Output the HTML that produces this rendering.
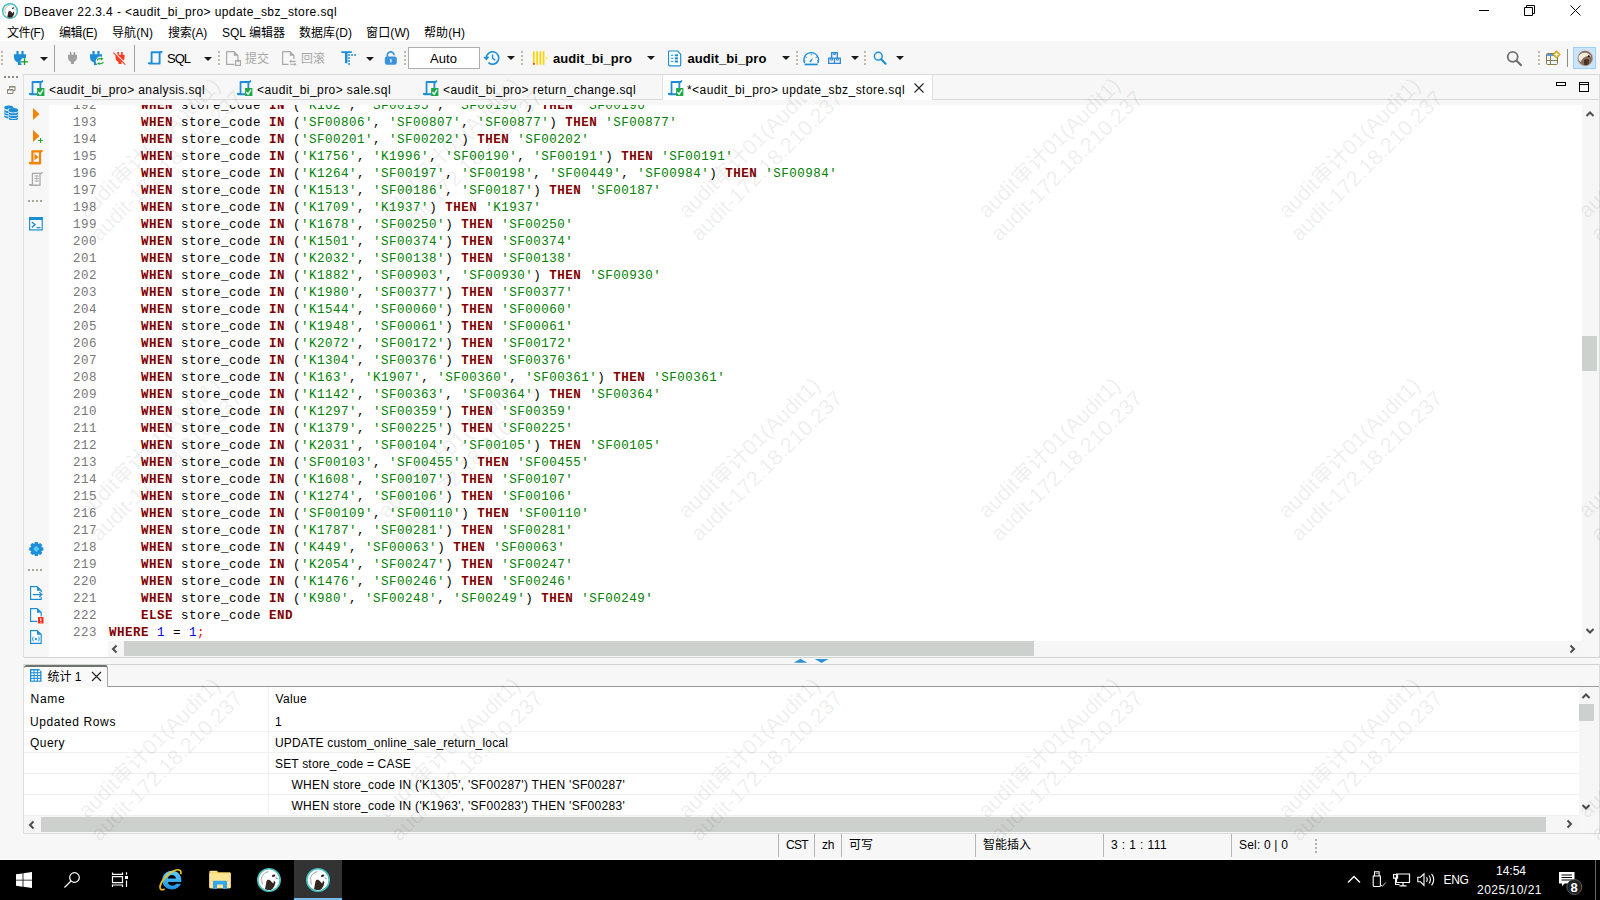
<!DOCTYPE html>
<html lang="zh"><head><meta charset="utf-8"><title>DBeaver 22.3.4 - update_sbz_store.sql</title>
<style>
html,body{margin:0;padding:0;}
body{width:1600px;height:900px;overflow:hidden;background:#fff;position:relative;font-family:"Liberation Sans","Noto Sans CJK SC",sans-serif;font-size:12px;}
.a{position:absolute;display:block;}
.t{position:absolute;white-space:pre;}

.wm{position:absolute;width:300px;height:60px;text-align:center;font-size:21.5px;line-height:24.5px;color:rgba(0,0,0,0.082);transform:rotate(-44.5deg);white-space:pre;pointer-events:none;}
.code{position:absolute;left:0;top:0;font-family:"Liberation Mono",monospace;font-size:12.5px;letter-spacing:0.5px;line-height:17px;white-space:pre;color:#000;}
.code b{color:#800000;}
.code i{color:#008000;font-style:normal;}
.code u{color:#0000ff;text-decoration:none;}
.code s{color:#ff0000;text-decoration:none;}
.ln{color:#787878;}

</style></head><body>
<div class="a" style="left:0px;top:0px;width:1600px;height:23px;background:#fff;"></div><svg class="a" style="left:1470px;top:0px;" width="120" height="22" viewBox="0 0 120 22"><path d="M9 10.5h10M54.5 7.5h8v8h-8zM56.5 7.5v-2h8v8h-2M100.5 5.5l10 10M110.5 5.5l-10 10" fill="none" stroke="#000" stroke-width="1"/></svg><div class="a" style="left:0px;top:23px;width:1600px;height:18px;background:#fff;"></div><div class="a" style="left:0px;top:41px;width:1600px;height:33px;background:#f7f7f7;"></div><svg class="a" style="left:1px;top:51px;" width="2" height="15" viewBox="0 0 2 15"><rect x="0" y="0" width="2" height="2" fill="#c2b9a7"/><rect x="0" y="4" width="2" height="2" fill="#c2b9a7"/><rect x="0" y="8" width="2" height="2" fill="#c2b9a7"/><rect x="0" y="12" width="2" height="2" fill="#c2b9a7"/></svg><svg class="a" style="left:40px;top:57px;" width="8" height="4" viewBox="0 0 8 4"><path d="M0 0h8l-4 4z" fill="#1a1a1a"/></svg><div class="a" style="left:54px;top:45px;width:1px;height:27px;background:#a0a0a0;"></div><div class="a" style="left:134px;top:45px;width:1px;height:27px;background:#a0a0a0;"></div><svg class="a" style="left:204px;top:57px;" width="8" height="4" viewBox="0 0 8 4"><path d="M0 0h8l-4 4z" fill="#1a1a1a"/></svg><svg class="a" style="left:218px;top:51px;" width="2" height="15" viewBox="0 0 2 15"><rect x="0" y="0" width="2" height="2" fill="#c2b9a7"/><rect x="0" y="4" width="2" height="2" fill="#c2b9a7"/><rect x="0" y="8" width="2" height="2" fill="#c2b9a7"/><rect x="0" y="12" width="2" height="2" fill="#c2b9a7"/></svg><svg class="a" style="left:366px;top:57px;" width="8" height="4" viewBox="0 0 8 4"><path d="M0 0h8l-4 4z" fill="#1a1a1a"/></svg><svg class="a" style="left:404px;top:51px;" width="2" height="15" viewBox="0 0 2 15"><rect x="0" y="0" width="2" height="2" fill="#c2b9a7"/><rect x="0" y="4" width="2" height="2" fill="#c2b9a7"/><rect x="0" y="8" width="2" height="2" fill="#c2b9a7"/><rect x="0" y="12" width="2" height="2" fill="#c2b9a7"/></svg><svg class="a" style="left:507px;top:56px;" width="8" height="4" viewBox="0 0 8 4"><path d="M0 0h8l-4 4z" fill="#1a1a1a"/></svg><svg class="a" style="left:521px;top:51px;" width="2" height="15" viewBox="0 0 2 15"><rect x="0" y="0" width="2" height="2" fill="#c2b9a7"/><rect x="0" y="4" width="2" height="2" fill="#c2b9a7"/><rect x="0" y="8" width="2" height="2" fill="#c2b9a7"/><rect x="0" y="12" width="2" height="2" fill="#c2b9a7"/></svg><svg class="a" style="left:647px;top:56px;" width="8" height="4" viewBox="0 0 8 4"><path d="M0 0h8l-4 4z" fill="#1a1a1a"/></svg><svg class="a" style="left:782px;top:56px;" width="8" height="4" viewBox="0 0 8 4"><path d="M0 0h8l-4 4z" fill="#1a1a1a"/></svg><svg class="a" style="left:796px;top:51px;" width="2" height="15" viewBox="0 0 2 15"><rect x="0" y="0" width="2" height="2" fill="#c2b9a7"/><rect x="0" y="4" width="2" height="2" fill="#c2b9a7"/><rect x="0" y="8" width="2" height="2" fill="#c2b9a7"/><rect x="0" y="12" width="2" height="2" fill="#c2b9a7"/></svg><svg class="a" style="left:851px;top:56px;" width="8" height="4" viewBox="0 0 8 4"><path d="M0 0h8l-4 4z" fill="#1a1a1a"/></svg><svg class="a" style="left:864px;top:51px;" width="2" height="15" viewBox="0 0 2 15"><rect x="0" y="0" width="2" height="2" fill="#c2b9a7"/><rect x="0" y="4" width="2" height="2" fill="#c2b9a7"/><rect x="0" y="8" width="2" height="2" fill="#c2b9a7"/><rect x="0" y="12" width="2" height="2" fill="#c2b9a7"/></svg><svg class="a" style="left:896px;top:56px;" width="8" height="4" viewBox="0 0 8 4"><path d="M0 0h8l-4 4z" fill="#1a1a1a"/></svg><div class="a" style="left:408px;top:47px;width:72px;height:22px;background:#fff;border:1px solid #adadad;box-sizing:border-box;"></div><svg class="a" style="left:1538px;top:51px;" width="2" height="15" viewBox="0 0 2 15"><rect x="0" y="0" width="2" height="2" fill="#c2b9a7"/><rect x="0" y="4" width="2" height="2" fill="#c2b9a7"/><rect x="0" y="8" width="2" height="2" fill="#c2b9a7"/><rect x="0" y="12" width="2" height="2" fill="#c2b9a7"/></svg><div class="a" style="left:1567px;top:49px;width:1px;height:18px;background:#8c8c8c;"></div><div class="a" style="left:1573px;top:47px;width:23px;height:22px;background:#cce4f7;border:1px solid #99d1ff;box-sizing:border-box;"></div><div class="a" style="left:0px;top:74px;width:23px;height:786px;background:#f7f7f7;"></div><div class="a" style="left:23px;top:74px;width:1577px;height:583px;background:#f7f7f7;border-left:1px solid #e0e0e0;border-top:1px solid #d9d9d9;box-sizing:border-box;"></div><div class="a" style="left:24px;top:99px;width:1576px;height:1px;background:#d9d9d9;"></div><div class="a" style="left:662px;top:75px;width:271px;height:25px;background:#fff;border-left:1px solid #e0e0e0;border-right:1px solid #e0e0e0;box-sizing:border-box;"></div><svg class="a" style="left:913px;top:82px;" width="12" height="12" viewBox="0 0 12 12"><path d="M1.5 1.5l9 9M10.5 1.5l-9 9" stroke="#222" stroke-width="1.1" fill="none"/></svg><svg class="a" style="left:1555px;top:80px;" width="40" height="14" viewBox="0 0 40 14"><rect x="1.5" y="2.5" width="9" height="3" fill="#fff" stroke="#000"/><rect x="24.5" y="2.5" width="9" height="9" fill="#fff" stroke="#000"/><path d="M24 4.5h10" stroke="#000"/></svg><div class="a" style="left:49px;top:105px;width:1533px;height:536px;background:#fff;"></div><div class="a" style="left:49px;top:641px;width:59px;height:16px;background:#fff;"></div><div class="a" style="left:1582px;top:105px;width:17px;height:536px;background:#f6f6f6;"></div><div class="a" style="left:1582px;top:336px;width:15px;height:35px;background:#cdd1cd;"></div><svg class="a" style="left:1585px;top:110px;" width="10" height="8" viewBox="0 0 10 8"><path d="M1.500 6L5 2.500 8.500 6" stroke="#4d4d4d" stroke-width="2" fill="none"/></svg><svg class="a" style="left:1585px;top:627px;" width="10" height="8" viewBox="0 0 10 8"><path d="M1.500 2L5 5.500 8.500 2" stroke="#4d4d4d" stroke-width="2" fill="none"/></svg><div class="a" style="left:108px;top:641px;width:1474px;height:16px;background:#f6f6f6;"></div><div class="a" style="left:124px;top:641px;width:910px;height:15px;background:#cdd1cd;"></div><svg class="a" style="left:111px;top:644px;" width="8" height="10" viewBox="0 0 8 10"><path d="M5.500 1.500L2 5l3.500 3.500" stroke="#4d4d4d" stroke-width="2" fill="none"/></svg><svg class="a" style="left:1568px;top:644px;" width="8" height="10" viewBox="0 0 8 10"><path d="M2.500 1.500L6 5l-3.500 3.500" stroke="#4d4d4d" stroke-width="2" fill="none"/></svg><div class="a" style="left:49px;top:105px;width:1533px;height:536px;overflow:hidden;"><div class="code ln" style="left:24px;top:-7px;">192
193
194
195
196
197
198
199
200
201
202
203
204
205
206
207
208
209
210
211
212
213
214
215
216
217
218
219
220
221
222
223</div><div class="code" style="left:60px;top:-7px;">    <b>WHEN</b> store_code <b>IN</b> (<i>'K162'</i>, <i>'SF00195'</i>, <i>'SF00196'</i>) <b>THEN</b> <i>'SF00196'</i>
    <b>WHEN</b> store_code <b>IN</b> (<i>'SF00806'</i>, <i>'SF00807'</i>, <i>'SF00877'</i>) <b>THEN</b> <i>'SF00877'</i>
    <b>WHEN</b> store_code <b>IN</b> (<i>'SF00201'</i>, <i>'SF00202'</i>) <b>THEN</b> <i>'SF00202'</i>
    <b>WHEN</b> store_code <b>IN</b> (<i>'K1756'</i>, <i>'K1996'</i>, <i>'SF00190'</i>, <i>'SF00191'</i>) <b>THEN</b> <i>'SF00191'</i>
    <b>WHEN</b> store_code <b>IN</b> (<i>'K1264'</i>, <i>'SF00197'</i>, <i>'SF00198'</i>, <i>'SF00449'</i>, <i>'SF00984'</i>) <b>THEN</b> <i>'SF00984'</i>
    <b>WHEN</b> store_code <b>IN</b> (<i>'K1513'</i>, <i>'SF00186'</i>, <i>'SF00187'</i>) <b>THEN</b> <i>'SF00187'</i>
    <b>WHEN</b> store_code <b>IN</b> (<i>'K1709'</i>, <i>'K1937'</i>) <b>THEN</b> <i>'K1937'</i>
    <b>WHEN</b> store_code <b>IN</b> (<i>'K1678'</i>, <i>'SF00250'</i>) <b>THEN</b> <i>'SF00250'</i>
    <b>WHEN</b> store_code <b>IN</b> (<i>'K1501'</i>, <i>'SF00374'</i>) <b>THEN</b> <i>'SF00374'</i>
    <b>WHEN</b> store_code <b>IN</b> (<i>'K2032'</i>, <i>'SF00138'</i>) <b>THEN</b> <i>'SF00138'</i>
    <b>WHEN</b> store_code <b>IN</b> (<i>'K1882'</i>, <i>'SF00903'</i>, <i>'SF00930'</i>) <b>THEN</b> <i>'SF00930'</i>
    <b>WHEN</b> store_code <b>IN</b> (<i>'K1980'</i>, <i>'SF00377'</i>) <b>THEN</b> <i>'SF00377'</i>
    <b>WHEN</b> store_code <b>IN</b> (<i>'K1544'</i>, <i>'SF00060'</i>) <b>THEN</b> <i>'SF00060'</i>
    <b>WHEN</b> store_code <b>IN</b> (<i>'K1948'</i>, <i>'SF00061'</i>) <b>THEN</b> <i>'SF00061'</i>
    <b>WHEN</b> store_code <b>IN</b> (<i>'K2072'</i>, <i>'SF00172'</i>) <b>THEN</b> <i>'SF00172'</i>
    <b>WHEN</b> store_code <b>IN</b> (<i>'K1304'</i>, <i>'SF00376'</i>) <b>THEN</b> <i>'SF00376'</i>
    <b>WHEN</b> store_code <b>IN</b> (<i>'K163'</i>, <i>'K1907'</i>, <i>'SF00360'</i>, <i>'SF00361'</i>) <b>THEN</b> <i>'SF00361'</i>
    <b>WHEN</b> store_code <b>IN</b> (<i>'K1142'</i>, <i>'SF00363'</i>, <i>'SF00364'</i>) <b>THEN</b> <i>'SF00364'</i>
    <b>WHEN</b> store_code <b>IN</b> (<i>'K1297'</i>, <i>'SF00359'</i>) <b>THEN</b> <i>'SF00359'</i>
    <b>WHEN</b> store_code <b>IN</b> (<i>'K1379'</i>, <i>'SF00225'</i>) <b>THEN</b> <i>'SF00225'</i>
    <b>WHEN</b> store_code <b>IN</b> (<i>'K2031'</i>, <i>'SF00104'</i>, <i>'SF00105'</i>) <b>THEN</b> <i>'SF00105'</i>
    <b>WHEN</b> store_code <b>IN</b> (<i>'SF00103'</i>, <i>'SF00455'</i>) <b>THEN</b> <i>'SF00455'</i>
    <b>WHEN</b> store_code <b>IN</b> (<i>'K1608'</i>, <i>'SF00107'</i>) <b>THEN</b> <i>'SF00107'</i>
    <b>WHEN</b> store_code <b>IN</b> (<i>'K1274'</i>, <i>'SF00106'</i>) <b>THEN</b> <i>'SF00106'</i>
    <b>WHEN</b> store_code <b>IN</b> (<i>'SF00109'</i>, <i>'SF00110'</i>) <b>THEN</b> <i>'SF00110'</i>
    <b>WHEN</b> store_code <b>IN</b> (<i>'K1787'</i>, <i>'SF00281'</i>) <b>THEN</b> <i>'SF00281'</i>
    <b>WHEN</b> store_code <b>IN</b> (<i>'K449'</i>, <i>'SF00063'</i>) <b>THEN</b> <i>'SF00063'</i>
    <b>WHEN</b> store_code <b>IN</b> (<i>'K2054'</i>, <i>'SF00247'</i>) <b>THEN</b> <i>'SF00247'</i>
    <b>WHEN</b> store_code <b>IN</b> (<i>'K1476'</i>, <i>'SF00246'</i>) <b>THEN</b> <i>'SF00246'</i>
    <b>WHEN</b> store_code <b>IN</b> (<i>'K980'</i>, <i>'SF00248'</i>, <i>'SF00249'</i>) <b>THEN</b> <i>'SF00249'</i>
    <b>ELSE</b> store_code <b>END</b>
<b>WHERE</b> <u>1</u> = <u>1</u><s>;</s></div></div><div class="a" style="left:23px;top:657px;width:1577px;height:8px;background:#f7f7f7;"></div><div class="a" style="left:24px;top:657px;width:1576px;height:1px;background:#d0d4d0;"></div><div class="a" style="left:24px;top:664px;width:1576px;height:1px;background:#d0d4d0;"></div><svg class="a" style="left:793px;top:658px;" width="38" height="6" viewBox="0 0 38 6"><path d="M0.700 4.800l6.800-4 6.800 4zM21.800 1h13.600l-6.800 4z" fill="#2e8fd6"/></svg><div class="a" style="left:23px;top:665px;width:1577px;height:168px;background:#f7f7f7;"></div><div class="a" style="left:24px;top:686px;width:1576px;height:1px;background:#9a9a9a;"></div><div class="a" style="left:24px;top:665px;width:84px;height:22px;background:#f9f9f9;border-right:1px solid #a8a8a8;border-top:2px solid #6f726f;box-sizing:border-box;border-top-left-radius:3px;border-top-right-radius:3px;"></div><svg class="a" style="left:91px;top:671px;" width="11" height="11" viewBox="0 0 11 11"><path d="M1 1l9 9M10 1l-9 9" stroke="#222" stroke-width="1.1" fill="none"/></svg><div class="a" style="left:24px;top:687px;width:1555px;height:129px;background:#fff;"></div><div class="a" style="left:24px;top:731px;width:1558px;height:1px;background:#f0f0f0;"></div><div class="a" style="left:24px;top:752px;width:1558px;height:1px;background:#f0f0f0;"></div><div class="a" style="left:24px;top:773px;width:1558px;height:1px;background:#f0f0f0;"></div><div class="a" style="left:24px;top:794px;width:1558px;height:1px;background:#f0f0f0;"></div><div class="a" style="left:24px;top:815px;width:1558px;height:1px;background:#f0f0f0;"></div><div class="a" style="left:268px;top:687px;width:1px;height:129px;background:#f0f0f0;"></div><div class="a" style="left:1579px;top:687px;width:20px;height:129px;background:#f6f6f6;"></div><div class="a" style="left:1579px;top:704px;width:15px;height:17px;background:#cdd1cd;"></div><svg class="a" style="left:1581px;top:692px;" width="10" height="8" viewBox="0 0 10 8"><path d="M1.500 6L5 2.500 8.500 6" stroke="#4d4d4d" stroke-width="2" fill="none"/></svg><svg class="a" style="left:1581px;top:803px;" width="10" height="8" viewBox="0 0 10 8"><path d="M1.500 2L5 5.500 8.500 2" stroke="#4d4d4d" stroke-width="2" fill="none"/></svg><div class="a" style="left:24px;top:816px;width:1555px;height:17px;background:#f6f6f6;"></div><div class="a" style="left:41px;top:817px;width:1505px;height:15px;background:#cdd1cd;"></div><svg class="a" style="left:28px;top:819.5px;" width="8" height="10" viewBox="0 0 8 10"><path d="M5.500 1.500L2 5l3.500 3.500" stroke="#4d4d4d" stroke-width="2" fill="none"/></svg><svg class="a" style="left:1565px;top:819px;" width="8" height="10" viewBox="0 0 8 10"><path d="M2.500 1.500L6 5l-3.500 3.500" stroke="#4d4d4d" stroke-width="2" fill="none"/></svg><div class="a" style="left:0px;top:833px;width:1600px;height:27px;background:#f7f7f7;"></div><div class="a" style="left:23px;top:833px;width:1577px;height:1px;background:#dcdcdc;"></div><div class="a" style="left:23px;top:664px;width:1px;height:170px;background:#dcdcdc;"></div><div class="a" style="left:1599px;top:664px;width:1px;height:170px;background:#dcdcdc;"></div><div class="a" style="left:1599px;top:74px;width:1px;height:584px;background:#dcdcdc;"></div><div class="a" style="left:0px;top:859px;width:1600px;height:1px;background:#fbfbfb;"></div><div class="a" style="left:778px;top:834px;width:1px;height:23px;background:#b4b4b4;"></div><div class="a" style="left:814px;top:834px;width:1px;height:23px;background:#b4b4b4;"></div><div class="a" style="left:841px;top:834px;width:1px;height:23px;background:#b4b4b4;"></div><div class="a" style="left:975px;top:834px;width:1px;height:23px;background:#b4b4b4;"></div><div class="a" style="left:1103px;top:834px;width:1px;height:23px;background:#b4b4b4;"></div><div class="a" style="left:1231px;top:834px;width:1px;height:23px;background:#b4b4b4;"></div><svg class="a" style="left:1315px;top:839px;" width="2" height="14" viewBox="0 0 2 14"><rect x="0" y="0" width="2" height="2" fill="#b0b0b0"/><rect x="0" y="4" width="2" height="2" fill="#b0b0b0"/><rect x="0" y="8" width="2" height="2" fill="#b0b0b0"/><rect x="0" y="12" width="2" height="2" fill="#b0b0b0"/></svg><div class="a" style="left:0px;top:860px;width:1600px;height:40px;background:#000;"></div><div class="a" style="left:294px;top:860px;width:48px;height:40px;background:#333;"></div><div class="a" style="left:294px;top:898px;width:48px;height:2px;background:#76b9ed;"></div><svg class="a" style="left:16px;top:872px;" width="16" height="16" viewBox="0 0 16 16"><path d="M0 2.3l6.6-.9v6.3H0zM7.4 1.3L16 0v7.7H7.4zM0 8.4h6.6v6.3L0 13.8zM7.4 8.4H16V16l-8.6-1.2z" fill="#fff"/></svg><svg class="a" style="left:63px;top:871px;" width="18" height="18" viewBox="0 0 18 18"><circle cx="11.500" cy="6.500" r="4.800" fill="none" stroke="#fff" stroke-width="1.200"/><path d="M8 10l-6.500 6.500" stroke="#fff" stroke-width="1.300"/></svg><svg class="a" style="left:110px;top:871px;" width="20" height="17" viewBox="0 0 20 17"><path d="M2.500 5.700h10v6h-10zM2.500 1.400v2h10v-2M2.500 16v-2h10v2M16.500 1.200v2.600M16.500 9.500v6.500" fill="none" stroke="#fff" stroke-width="1.200"/><rect x="15" y="5" width="3" height="3" fill="#fff"/></svg><div class="a" style="left:1595px;top:860px;width:1px;height:40px;background:#666;"></div><svg class="a" style="left:0px;top:0px;" width="22" height="23" viewBox="0 0 22 23"><circle cx="10" cy="11" r="7.35" fill="#fff" stroke="#45bdbd" stroke-width="1.5"/><g transform="translate(10 11) scale(0.675)"><path d="M-4 9.300L-2.500 1.200C-1.500-.800.800-.600 2.200 1.600L4.200 3.600 5.100.400 6.400 2.600 5.600 5.800 3.300 9.200C1 10.300-2 10.300-4 9.300z" fill="#33251f"/><ellipse cx="4.600" cy="-4.300" rx="1.700" ry="1.100" fill="#2a1f1c" transform="rotate(-15 4.600 -4.300)"/><path d="M-7.800-.500C-7.500-4.500-4.500-7.800-.500-8.300M-6.500 4.500C-7.200 2.500-7.300 1-7-.500" fill="none" stroke="#8f8782" stroke-width=".8"/><path d="M6.800-2.500c.8.300 1.300.900 1.500 1.600" fill="none" stroke="#5a4a44" stroke-width=".8"/></g></svg><svg class="a" style="left:14px;top:51px;" width="15" height="14" viewBox="0 0 15 14"><g><path d="M2.4 0h2.200v3.300h2.800V0h2.200v3.300H12v3.200c0 2.600-1.800 4.300-4 5v2.500H4v-2.500c-2.200-.7-4-2.400-4-5V3.300h2.400z" fill="#1c8ed8"/></g><circle cx="10.5" cy="10.800" r="3.900" fill="#f7f7f7"/><path d="M10.5 7.300v7M7 10.800h7" stroke="#0aa01e" stroke-width="1.250" fill="none"/></svg><svg class="a" style="left:68px;top:52px;" width="9" height="12" viewBox="0 0 9 12"><g transform="scale(.75 .86)"><path d="M2.4 0h2.200v3.300h2.800V0h2.200v3.300H12v3.200c0 2.600-1.800 4.300-4 5v2.500H4v-2.500c-2.200-.7-4-2.400-4-5V3.300h2.400z" fill="#a0a0a0"/></g></svg><svg class="a" style="left:90px;top:51px;" width="15" height="14" viewBox="0 0 15 14"><path d="M2.4 0h2.200v3.300h2.800V0h2.200v3.300H12v3.200c0 2.600-1.800 4.300-4 5v2.500H4v-2.500c-2.200-.7-4-2.400-4-5V3.300h2.400z" fill="#1c8ed8"/><circle cx="10.300" cy="10.200" r="4.600" fill="#f7f7f7"/><path d="M7.200 9.600c.5-1.700 2.600-2.500 4.300-1.600M13.300 10.800c-.5 1.700-2.600 2.500-4.300 1.600" stroke="#12a32a" stroke-width="1.100" fill="none"/><path d="M10.800 6.300l2.600 1.500-2.300 1.700zM9.700 14.100l-2.600-1.500 2.300-1.700z" fill="#12a32a"/></svg><svg class="a" style="left:113px;top:52px;" width="13" height="13" viewBox="0 0 13 13"><g transform="translate(2.500 0) scale(.75 .86)"><path d="M2.4 0h2.200v3.300h2.800V0h2.200v3.300H12v3.200c0 2.600-1.800 4.300-4 5v2.500H4v-2.500c-2.200-.7-4-2.400-4-5V3.300h2.400z" fill="#ff3a1e"/></g><path d="M0.900 0.100L12.500 12" stroke="#f7f7f7" stroke-width="1.700"/><path d="M0.300 0.600L12.300 12.600" stroke="#ff3a1e" stroke-width="1.100"/></svg><svg class="a" style="left:148px;top:51px;" width="15" height="14" viewBox="0 0 15 14"><path d="M14.400 0.400c-.9 0-1.300.4-1.500.9H3.600v10.400M11.600 1.300v11.300H1.800c-.7 0-1.200-.4-1.500-.9" fill="none" stroke="#1c8ed8" stroke-width="1.9" stroke-linejoin="round"/><path d="M0 11.500h3.800v.900H0z" fill="#1c8ed8"/></svg><svg class="a" style="left:29px;top:80px;" width="16" height="17" viewBox="0 0 16 17"><g transform="translate(0 .6) scale(.98 1.080)"><path d="M14.400 0.400c-.9 0-1.300.4-1.500.9H3.600v10.400M11.600 1.300v11.300H1.800c-.7 0-1.200-.4-1.500-.9" fill="none" stroke="#1c8ed8" stroke-width="1.8" stroke-linejoin="round"/><path d="M0 11.500h3.800v.900H0z" fill="#1c8ed8"/></g><rect x="8.100" y="8" width="7.300" height="8" fill="#21a84a"/><path d="M9.400 12.200l1.700 1.900 3-4.500" stroke="#fff" stroke-width="1.300" fill="none"/></svg><svg class="a" style="left:237px;top:80px;" width="16" height="17" viewBox="0 0 16 17"><g transform="translate(0 .6) scale(.98 1.080)"><path d="M14.400 0.400c-.9 0-1.300.4-1.500.9H3.600v10.400M11.600 1.300v11.300H1.800c-.7 0-1.200-.4-1.500-.9" fill="none" stroke="#1c8ed8" stroke-width="1.8" stroke-linejoin="round"/><path d="M0 11.500h3.800v.900H0z" fill="#1c8ed8"/></g><rect x="8.100" y="8" width="7.300" height="8" fill="#21a84a"/><path d="M9.400 12.200l1.700 1.900 3-4.500" stroke="#fff" stroke-width="1.300" fill="none"/></svg><svg class="a" style="left:423px;top:80px;" width="16" height="17" viewBox="0 0 16 17"><g transform="translate(0 .6) scale(.98 1.080)"><path d="M14.400 0.400c-.9 0-1.300.4-1.500.9H3.600v10.400M11.600 1.300v11.300H1.800c-.7 0-1.200-.4-1.500-.9" fill="none" stroke="#1c8ed8" stroke-width="1.8" stroke-linejoin="round"/><path d="M0 11.500h3.800v.900H0z" fill="#1c8ed8"/></g><rect x="8.100" y="8" width="7.300" height="8" fill="#21a84a"/><path d="M9.400 12.200l1.700 1.900 3-4.500" stroke="#fff" stroke-width="1.300" fill="none"/></svg><svg class="a" style="left:667.6px;top:80px;" width="16" height="17" viewBox="0 0 16 17"><g transform="translate(0 .6) scale(.98 1.080)"><path d="M14.400 0.400c-.9 0-1.300.4-1.500.9H3.600v10.400M11.600 1.300v11.300H1.800c-.7 0-1.200-.4-1.500-.9" fill="none" stroke="#1c8ed8" stroke-width="1.8" stroke-linejoin="round"/><path d="M0 11.500h3.800v.900H0z" fill="#1c8ed8"/></g><rect x="8.100" y="8" width="7.300" height="8" fill="#21a84a"/><path d="M9.400 12.200l1.700 1.900 3-4.500" stroke="#fff" stroke-width="1.300" fill="none"/></svg><svg class="a" style="left:226px;top:51px;" width="16" height="15" viewBox="0 0 16 15"><path d="M0.600 0.600h7.400l3.900 3.900v5M8.500 13.400H0.600V0.600" fill="none" stroke="#a8a8a8" stroke-width="1.200"/><path d="M7.800 0.600v4.100h4.100z" fill="#a8a8a8"/><rect x="9.600" y="9.600" width="4.800" height="4.800" fill="none" stroke="#a8a8a8" stroke-width="1.200"/><path d="M10.800 10.200h2.400" stroke="#a8a8a8" stroke-width="1.200"/></svg><svg class="a" style="left:282px;top:51px;" width="16" height="16" viewBox="0 0 16 16"><path d="M0.600 0.600h7.400l3.900 3.900v3.500M6.500 13.400H0.600V0.600" fill="none" stroke="#a8a8a8" stroke-width="1.200"/><path d="M7.800 0.600v4.100h4.100z" fill="#a8a8a8"/><path d="M8 10.400h5.500M8.200 13.300h5.500" stroke="#a8a8a8" stroke-width="1.100"/><path d="M9.300 8.800l-2.200 1.600 2.200 1.600zM12.300 11.700l2.200 1.600-2.200 1.600z" fill="#a8a8a8"/></svg><svg class="a" style="left:341px;top:51px;" width="16" height="15" viewBox="0 0 16 15"><path d="M0.300 0.300h10.500v1.800H0.300zM4 1.500h2.500v10.800H4z" fill="#1c8ed8"/><rect x="7.2" y="3.100" width="1.700" height="1.700" fill="#1c8ed8"/><rect x="10.2" y="3.100" width="1.700" height="1.700" fill="#1c8ed8"/><rect x="13.2" y="3.100" width="1.700" height="1.700" fill="#1c8ed8"/><rect x="7.200" y="6.1" width="1.700" height="1.700" fill="#1c8ed8"/><rect x="7.200" y="9.1" width="1.700" height="1.700" fill="#1c8ed8"/><rect x="7.200" y="12.1" width="1.700" height="1.700" fill="#1c8ed8"/></svg><svg class="a" style="left:384px;top:51px;" width="14" height="14" viewBox="0 0 14 14"><path d="M3.300 6V4.200a3.400 3.400 0 0 1 6.800 0" fill="none" stroke="#3a93dc" stroke-width="1.700"/><rect x="0.800" y="5.400" width="12" height="8.400" rx="2.200" fill="#3a93dc"/><path d="M6.200 8h1.300v3.400H6.200z" fill="#fff"/></svg><svg class="a" style="left:483px;top:50px;" width="18" height="16" viewBox="0 0 18 16"><path d="M3.400 8a6.200 6.200 0 1 1 2 4.600" fill="none" stroke="#1c8ed8" stroke-width="1.600"/><path d="M0.300 6.800h6.200L3.400 10.400z" fill="#1c8ed8"/><path d="M9.600 4.400v3.800l2.700 1.900" fill="none" stroke="#1c8ed8" stroke-width="1.400"/></svg><svg class="a" style="left:532px;top:51px;" width="16" height="14" viewBox="0 0 16 14"><rect x="1" y="0.300" width="1.700" height="13.400" fill="#ffd200"/><rect x="4.3" y="0.300" width="1.700" height="13.400" fill="#ffd200"/><rect x="7.5" y="0.300" width="1.700" height="13.400" fill="#ffd200"/><rect x="10.7" y="0.300" width="1.700" height="13.400" fill="#ffd200"/><rect x="1" y="12" width="1.700" height="1.700" fill="#ff2a1a"/><circle cx="14.500" cy="7" r="1" fill="#ffdf33"/></svg><svg class="a" style="left:668px;top:50px;" width="14" height="17" viewBox="0 0 14 17"><path d="M1.500 1h8l3.200 3.200v10.600a1 1 0 0 1-1 1H1.500a1 1 0 0 1-1-1V2a1 1 0 0 1 1-1z" fill="#fff" stroke="#1c8ed8" stroke-width="1.200"/><rect x="2.800" y="4.7" width="2.600" height="1" fill="#1c8ed8"/><rect x="6.800" y="4.3" width="3.200" height="2" fill="#1c8ed8"/><rect x="2.800" y="7.800000000000001" width="2.600" height="1" fill="#1c8ed8"/><rect x="6.800" y="7.4" width="3.200" height="2" fill="#1c8ed8"/><rect x="2.800" y="10.9" width="2.600" height="1" fill="#1c8ed8"/><rect x="6.800" y="10.5" width="3.200" height="2" fill="#1c8ed8"/></svg><svg class="a" style="left:802px;top:51.7px;" width="18" height="15" viewBox="0 0 18 15"><path d="M2.700 11.300A7.300 7.300 0 1 1 15.700 11.300" fill="none" stroke="#1c8ed8" stroke-width="1.300"/><path d="M2.700 11.600h13v1.700H2.700z" fill="#1c8ed8"/><path d="M7.200 9.300l4-3.600-2.400 4.800z" fill="#1c8ed8"/><path d="M9.200 1.500v1.800M3.400 4.800l1.400 1M15 4.800l-1.400 1M1.700 8.800h1.700M16.700 8.800h-1.700" stroke="#1c8ed8" stroke-width="1"/></svg><svg class="a" style="left:827px;top:51px;" width="15" height="14" viewBox="0 0 15 14"><path d="M4.700 1.700h5.600v5.500H4.700zM1.700 7.200h5.800v5.100H1.700zM7.500 7.200h5.800v5.100H7.500z" fill="none" stroke="#2a87d6" stroke-width="1.300"/><path d="M6.600 1.700v1.900h1.800V1.700M3.700 7.200v1.900h1.800V7.200M9.500 7.200v1.900h1.800V7.200" fill="none" stroke="#2a87d6" stroke-width="1"/></svg><svg class="a" style="left:873px;top:50px;" width="15" height="16" viewBox="0 0 15 16"><circle cx="5.300" cy="6.200" r="3.900" fill="none" stroke="#1c8ed8" stroke-width="1.500"/><path d="M8.200 9.200l4.400 4.500" stroke="#1c8ed8" stroke-width="2.100" stroke-linecap="round"/></svg><svg class="a" style="left:1505px;top:49px;" width="19" height="19" viewBox="0 0 19 19"><circle cx="7.700" cy="7.800" r="5" fill="none" stroke="#6e6e6e" stroke-width="1.800"/><path d="M11.300 11.500l5.300 5.300" stroke="#6e6e6e" stroke-width="2.200"/></svg><svg class="a" style="left:1545px;top:50px;" width="17" height="16" viewBox="0 0 17 16"><rect x="1.500" y="3.500" width="11" height="11" rx="1" fill="#eaf6ff" stroke="#8a7a4a" stroke-width="1"/><rect x="2" y="4" width="10" height="2" fill="#5b9be0"/><path d="M5.500 6v8.500M1.500 10.500h11" stroke="#8a7a4a" stroke-width="1"/><path d="M11.500 0.800l3.700 3.700-3.700 3.700-3.700-3.700z" fill="#e7b416" stroke="#c8900a" stroke-width=".8"/><path d="M11.500 2.500v4M9.500 4.500h4" stroke="#fff" stroke-width="1.200"/></svg><svg class="a" style="left:1576px;top:50px;" width="18" height="17" viewBox="0 0 18 17"><circle cx="9.200" cy="8.200" r="7.500" fill="#8a6d5c"/><path d="M2.500 6.500c1.500-3 5-4.500 8.500-3.500 2 1 3.500 2 4.500 4-2-1.500-4-1.500-5.500-.5-2 .5-4 2.500-5.500 5.500-1.500-1.500-2.500-3.500-2-5.500z" fill="#f2ebe2"/><path d="M8 10c1.500-1.500 3.500-1.500 5 0l-.5 4.500c-1.500 1.300-3 1.300-4.500.2z" fill="#4a342a"/><circle cx="12.800" cy="6.300" r="1" fill="#2a1d18"/><circle cx="9.200" cy="8.200" r="7.500" fill="none" stroke="#b7a79b" stroke-width=".6"/></svg><svg class="a" style="left:4px;top:76px;" width="14" height="2" viewBox="0 0 14 2"><rect x="0" y="0" width="2" height="2" fill="#8f8a7c"/><rect x="4" y="0" width="2" height="2" fill="#8f8a7c"/><rect x="8" y="0" width="2" height="2" fill="#8f8a7c"/><rect x="12" y="0" width="2" height="2" fill="#8f8a7c"/></svg><svg class="a" style="left:6px;top:85px;" width="10" height="10" viewBox="0 0 10 10"><path d="M3.500 3.500V1.500h5.500v4H7M1.500 4.500h5.500v4H1.500z" fill="none" stroke="#8a8272" stroke-width="1"/><path d="M3.500 2h5.500M1.500 5h5.500" stroke="#8a8272" stroke-width="1"/></svg><svg class="a" style="left:4px;top:105px;" width="15" height="15" viewBox="0 0 15 15"><path d="M0.300 9.700000000000001v1.600a4.500 2 0 0 0 9 0v-1.600z" fill="#1c8ed8"/><ellipse cx="4.800" cy="9.4" rx="4.500" ry="2" fill="#f7f7f7"/><path d="M0.300 7.0v1.600a4.500 2 0 0 0 9 0v-1.600z" fill="#1c8ed8"/><ellipse cx="4.800" cy="6.699999999999999" rx="4.500" ry="2" fill="#f7f7f7"/><path d="M0.300 4.300000000000001v1.600a4.500 2 0 0 0 9 0v-1.600z" fill="#1c8ed8"/><ellipse cx="4.800" cy="4.0" rx="4.500" ry="2" fill="#f7f7f7"/><ellipse cx="4.8" cy="2.6" rx="4.5" ry="2.1" fill="#1c8ed8"/><rect x="4.300" y="3.400" width="10" height="11" fill="#f7f7f7"/><path d="M4.700 12.0v1.600a4.700 2 0 0 0 9.400 0v-1.600z" fill="#1c8ed8"/><ellipse cx="9.400" cy="11.7" rx="4.700" ry="2" fill="#f7f7f7"/><path d="M4.700 9.3v1.600a4.700 2 0 0 0 9.400 0v-1.600z" fill="#1c8ed8"/><ellipse cx="9.400" cy="9.0" rx="4.700" ry="2" fill="#f7f7f7"/><path d="M4.700 6.6v1.600a4.700 2 0 0 0 9.400 0v-1.600z" fill="#1c8ed8"/><ellipse cx="9.400" cy="6.299999999999999" rx="4.700" ry="2" fill="#f7f7f7"/><ellipse cx="9.4" cy="5.2" rx="4.7" ry="2.2" fill="#1c8ed8"/></svg><svg class="a" style="left:32px;top:108px;" width="8" height="12" viewBox="0 0 8 12"><path d="M1 0l6.500 6L1 12z" fill="#f58200"/></svg><svg class="a" style="left:32px;top:130px;" width="13" height="14" viewBox="0 0 13 14"><path d="M1 0l6.500 6L1 12z" fill="#f58200"/><path d="M8.500 8v5M6 10.500h5" stroke="#2ea02e" stroke-width="1.100"/></svg><svg class="a" style="left:29px;top:150px;" width="15" height="15" viewBox="0 0 15 15"><g transform="scale(.95 1.050)"><path d="M14.400 0.400c-.9 0-1.300.4-1.500.9H3.600v10.400M11.600 1.300v11.300H1.800c-.7 0-1.200-.4-1.500-.9" fill="none" stroke="#f58200" stroke-width="2.3" stroke-linejoin="round"/><path d="M0 11.500h3.800v.900H0z" fill="#f58200"/></g><path d="M5.500 3.800l4 3.200-4 3.200z" fill="#f58200"/></svg><svg class="a" style="left:29px;top:172px;" width="15" height="15" viewBox="0 0 15 15"><g transform="scale(.95 1.050)"><path d="M14.400 0.400c-.9 0-1.300.4-1.500.9H3.600v10.400M11.600 1.300v11.300H1.800c-.7 0-1.200-.4-1.500-.9" fill="none" stroke="#a9a9a9" stroke-width="1.3" stroke-linejoin="round"/><path d="M0 11.500h3.800v.900H0z" fill="#a9a9a9"/></g><path d="M5.500 4h4.500M5.500 6.500h4.500M5.500 9h4.500M7.700 3v7" stroke="#b5b5b5" stroke-width="1"/></svg><svg class="a" style="left:28px;top:200px;" width="14" height="2" viewBox="0 0 14 2"><rect x="0" y="0" width="2" height="2" fill="#aaa696"/><rect x="4" y="0" width="2" height="2" fill="#aaa696"/><rect x="8" y="0" width="2" height="2" fill="#aaa696"/><rect x="12" y="0" width="2" height="2" fill="#aaa696"/></svg><svg class="a" style="left:29px;top:217px;" width="15" height="14" viewBox="0 0 15 14"><rect x="0.600" y="0.600" width="12.600" height="12.300" fill="#fff" stroke="#1c8ed8" stroke-width="1.200"/><rect x="0" y="0" width="13.800" height="3" fill="#1c8ed8"/><path d="M2.800 5l3.200 2.700-3.200 2.700M7.500 10.600h4" fill="none" stroke="#1c8ed8" stroke-width="1.400"/></svg><svg class="a" style="left:29px;top:542px;" width="15" height="14" viewBox="0 0 15 14"><path d="M14.36 5.57L14.36 8.43L12.20 9.01L12.19 9.04L13.30 10.98L11.28 13.00L9.34 11.89L9.32 11.90L8.73 14.06L5.87 14.06L5.29 11.90L5.26 11.89L3.32 13.00L1.30 10.98L2.41 9.04L2.40 9.02L0.24 8.43L0.24 5.57L2.40 4.99L2.41 4.96L1.30 3.02L3.32 1.00L5.26 2.11L5.28 2.10L5.87 -0.06L8.73 -0.06L9.31 2.10L9.34 2.11L11.28 1.00L13.30 3.02L12.19 4.96L12.20 4.98z" fill="#1c8ed8"/><path d="M7.300 3.800l3.200 3.200-3.200 3.200-3.200-3.200z" fill="#5cc6f5"/></svg><svg class="a" style="left:28px;top:569px;" width="14" height="2" viewBox="0 0 14 2"><rect x="0" y="0" width="2" height="2" fill="#aaa696"/><rect x="4" y="0" width="2" height="2" fill="#aaa696"/><rect x="8" y="0" width="2" height="2" fill="#aaa696"/><rect x="12" y="0" width="2" height="2" fill="#aaa696"/></svg><svg class="a" style="left:30px;top:586px;" width="14" height="15" viewBox="0 0 14 15"><path d="M11.200 6.300V4.600l-4-4H0.600v12.800h10.600v-2.500" fill="#fff" stroke="#1c8ed8" stroke-width="1.200"/><path d="M7 0.600v4.200h4.200z" fill="#1c8ed8"/><path d="M3 8.600h8.500M9.200 6.200l2.600 2.400-2.600 2.400" fill="none" stroke="#1c8ed8" stroke-width="1.200"/></svg><svg class="a" style="left:30px;top:608px;" width="14" height="16" viewBox="0 0 14 16"><path d="M7.500 13.400H0.600V0.600h6.600l4 4v4" fill="#fff" stroke="#1c8ed8" stroke-width="1.200"/><path d="M7 0.600v4.200h4.200z" fill="#1c8ed8"/><rect x="8" y="9" width="5.500" height="6.500" fill="#ff2a1a"/><path d="M10.200 10v3h1.100v-3zM10.200 13.700v1h1.100v-1z" fill="#fff"/></svg><svg class="a" style="left:30px;top:630px;" width="14" height="15" viewBox="0 0 14 15"><path d="M0.600 0.600h6.600l4 4v8.800H0.600z" fill="#fff" stroke="#1c8ed8" stroke-width="1.200"/><path d="M7 0.600v4.200h4.200z" fill="#1c8ed8"/><path d="M3.400 6.600c-1 1.400-1 3.400 0 4.800M8.400 6.600c1 1.400 1 3.400 0 4.800" fill="none" stroke="#1c8ed8" stroke-width="1"/><path d="M4.900 7.800l2 2.500M6.900 7.800l-2 2.500" stroke="#1c8ed8" stroke-width="1"/></svg><svg class="a" style="left:30px;top:669px;" width="12" height="13" viewBox="0 0 12 13"><path d="M0 0h9l2.500 2.500V12.800H0z" fill="#1c8ed8"/><rect x="1.3" y="1.5" width="2.300" height="1.700" fill="#fff"/><rect x="1.3" y="4.3" width="2.300" height="1.700" fill="#fff"/><rect x="1.3" y="7.1" width="2.300" height="1.700" fill="#fff"/><rect x="1.3" y="9.9" width="2.300" height="1.700" fill="#fff"/><rect x="4.6" y="1.5" width="2.300" height="1.700" fill="#fff"/><rect x="4.6" y="4.3" width="2.300" height="1.700" fill="#fff"/><rect x="4.6" y="7.1" width="2.300" height="1.700" fill="#fff"/><rect x="4.6" y="9.9" width="2.300" height="1.700" fill="#fff"/><rect x="7.9" y="1.5" width="2.300" height="1.700" fill="#fff"/><rect x="7.9" y="4.3" width="2.300" height="1.700" fill="#fff"/><rect x="7.9" y="7.1" width="2.300" height="1.700" fill="#fff"/><rect x="7.9" y="9.9" width="2.300" height="1.700" fill="#fff"/></svg><svg class="a" style="left:158px;top:866px;" width="26" height="26" viewBox="0 0 26 26"><defs><linearGradient id="ieg" x1="0" y1="0" x2="0" y2="1"><stop offset="0" stop-color="#5fd0fb"/><stop offset="1" stop-color="#1d8fe0"/></linearGradient></defs><path d="M4.300 14.200c0-5.400 4.200-9.400 9.600-9.400 5.500 0 9.400 4 9.400 9.600v1.700H9.800c.5 2.300 2.200 3.600 4.500 3.600 1.700 0 3-.6 4-1.900h4.500c-1.400 3.500-4.600 5.600-8.600 5.600-5.800 0-9.900-3.900-9.900-9.200zm5.500-1.700h8.200c-.4-2.100-1.900-3.400-4-3.400-2.200 0-3.700 1.300-4.200 3.400z" fill="url(#ieg)"/><path d="M22.600 8.300c1.800-4.600-2.600-6-8.200-2.800-6.500 3.600-12 10.600-12.400 15.400-.3 3 2 3.500 4.600 2.100" fill="none" stroke="#f2c01e" stroke-width="1.700"/></svg><svg class="a" style="left:209px;top:870px;" width="22" height="20" viewBox="0 0 22 20"><path d="M0.300 1.700a1 1 0 0 1 1-1h6.700l1.300 1.600h11.400a1 1 0 0 1 1 1v14a1 1 0 0 1-1 1h-19.400a1 1 0 0 1-1-1z" fill="#f3cf60"/><path d="M0.300 3.200h21.400v14.100a1 1 0 0 1-1 1h-19.400a1 1 0 0 1-1-1z" fill="#fce595"/><path d="M1.700 1.300h5v.9h-5z" fill="#fff6d0"/><path d="M4 19v-7.300a1 1 0 0 1 1-1h12a1 1 0 0 1 1 1V19h-4v-4.500h-6V19z" fill="#35a6ee"/></svg><svg class="a" style="left:256px;top:867px;" width="26" height="26" viewBox="0 0 26 26"><circle cx="13" cy="13" r="11.2" fill="#fff" stroke="#46c0c0" stroke-width="1.6"/><g transform="translate(13 13) scale(1)"><path d="M-4 9.300L-2.500 1.200C-1.500-.800.800-.600 2.200 1.600L4.200 3.600 5.100.400 6.400 2.600 5.600 5.800 3.300 9.200C1 10.300-2 10.300-4 9.300z" fill="#33251f"/><ellipse cx="4.600" cy="-4.300" rx="1.700" ry="1.100" fill="#2a1f1c" transform="rotate(-15 4.600 -4.300)"/><path d="M-7.800-.500C-7.500-4.500-4.500-7.800-.500-8.300M-6.500 4.500C-7.200 2.500-7.300 1-7-.500" fill="none" stroke="#8f8782" stroke-width=".8"/><path d="M6.800-2.500c.8.300 1.300.900 1.500 1.600" fill="none" stroke="#5a4a44" stroke-width=".8"/></g></svg><svg class="a" style="left:305px;top:867px;" width="26" height="26" viewBox="0 0 26 26"><circle cx="13" cy="13" r="11.2" fill="#fff" stroke="#46c0c0" stroke-width="1.6"/><g transform="translate(13 13) scale(1)"><path d="M-4 9.300L-2.500 1.200C-1.500-.800.800-.600 2.200 1.600L4.200 3.600 5.100.400 6.400 2.600 5.600 5.800 3.300 9.200C1 10.300-2 10.300-4 9.300z" fill="#33251f"/><ellipse cx="4.600" cy="-4.300" rx="1.700" ry="1.100" fill="#2a1f1c" transform="rotate(-15 4.600 -4.300)"/><path d="M-7.800-.500C-7.500-4.500-4.500-7.800-.500-8.300M-6.500 4.500C-7.200 2.500-7.300 1-7-.500" fill="none" stroke="#8f8782" stroke-width=".8"/><path d="M6.800-2.500c.8.300 1.300.900 1.500 1.600" fill="none" stroke="#5a4a44" stroke-width=".8"/></g></svg><svg class="a" style="left:1347px;top:875px;" width="14" height="9" viewBox="0 0 14 9"><path d="M1 7.600l6-6 6 6" fill="none" stroke="#fff" stroke-width="1.400"/></svg><svg class="a" style="left:1372px;top:871px;" width="15" height="17" viewBox="0 0 15 17"><path d="M2.500 0.700h4.600v4.300H2.500zM1.200 5h7.200v9.500a1 1 0 0 1-1 1H2.200a1 1 0 0 1-1-1z" fill="none" stroke="#fff" stroke-width="1.100"/><path d="M3.800 2.300h.8M5.500 2.300h.8" stroke="#fff" stroke-width="1"/><path d="M8.500 13.500l1.800 1.800 3.500-3.800" fill="none" stroke="#ddd" stroke-width="1"/></svg><svg class="a" style="left:1393px;top:873px;" width="18" height="15" viewBox="0 0 18 15"><path d="M3.500 1h13v8.500h-13zM10 9.500v3M6.500 12.800h7" fill="none" stroke="#fff" stroke-width="1.200"/><path d="M0.600 1.500h4v3.600h-4zM2.600 5v6.500h4" fill="none" stroke="#fff" stroke-width="1.100"/></svg><svg class="a" style="left:1417px;top:872px;" width="19" height="16" viewBox="0 0 19 16"><path d="M0.800 5.200h2.700L7 1.800v11.500L3.500 9.800H0.800z" fill="none" stroke="#fff" stroke-width="1.100"/><path d="M9.500 5.200c1 1.500 1 3.200 0 4.700M12 3.500c1.800 2.500 1.800 5.500 0 8M14.600 1.800c2.600 3.500 2.600 8 0 11.500" fill="none" stroke="#fff" stroke-width="1.100"/></svg><svg class="a" style="left:1558px;top:871px;" width="26" height="26" viewBox="0 0 26 26"><path d="M1 1h15.500v11.500H6.500l-2.500 2.800v-2.800H1z" fill="#fff"/><path d="M3.500 4h10.500M3.500 6.500h10.500M3.500 9h10.500" stroke="#000" stroke-width="1"/><circle cx="16.300" cy="16" r="7.500" fill="#1f1f1f" stroke="#5a5a5a" stroke-width="1"/></svg>
<span class="t" style="left:24px;top:2.5px;font-size:12px;line-height:18px;color:#000;letter-spacing:0.413px;">DBeaver 22.3.4 - &lt;audit_bi_pro&gt; update_sbz_store.sql</span><span class="t" style="left:7px;top:24px;font-size:12px;line-height:18px;color:#000;letter-spacing:-0.466px;">文件(F)</span><span class="t" style="left:59px;top:24px;font-size:12px;line-height:18px;color:#000;letter-spacing:-0.400px;">编辑(E)</span><span class="t" style="left:112px;top:24px;font-size:12px;line-height:18px;color:#000;letter-spacing:0.066px;">导航(N)</span><span class="t" style="left:168px;top:24px;font-size:12px;line-height:18px;color:#000;letter-spacing:-0.200px;">搜索(A)</span><span class="t" style="left:222px;top:24px;font-size:12px;line-height:18px;color:#000;letter-spacing:0.013px;">SQL 编辑器</span><span class="t" style="left:299px;top:24px;font-size:12px;line-height:18px;color:#000;letter-spacing:0.055px;">数据库(D)</span><span class="t" style="left:366px;top:24px;font-size:12px;line-height:18px;color:#000;letter-spacing:0.134px;">窗口(W)</span><span class="t" style="left:424px;top:24px;font-size:12px;line-height:18px;color:#000;letter-spacing:0.066px;">帮助(H)</span><span class="t" style="left:167px;top:49px;font-size:13px;line-height:20px;color:#000;letter-spacing:-1.005px;">SQL</span><span class="t" style="left:245px;top:50px;font-size:12px;line-height:18px;color:#a8a8a8;letter-spacing:-0.008px;">提交</span><span class="t" style="left:301px;top:50px;font-size:12px;line-height:18px;color:#a8a8a8;letter-spacing:-0.008px;">回滚</span><span class="t" style="left:430px;top:49px;font-size:13px;line-height:20px;color:#000;letter-spacing:0.062px;">Auto</span><span class="t" style="left:553px;top:49px;font-size:13px;line-height:20px;color:#000;font-weight:bold;letter-spacing:0.082px;">audit_bi_pro</span><span class="t" style="left:687.5px;top:49px;font-size:13px;line-height:20px;color:#000;font-weight:bold;letter-spacing:0.082px;">audit_bi_pro</span><span class="t" style="left:49px;top:80.5px;font-size:12px;line-height:18px;color:#000;letter-spacing:0.391px;">&lt;audit_bi_pro&gt; analysis.sql</span><span class="t" style="left:257px;top:80.5px;font-size:12px;line-height:18px;color:#000;letter-spacing:0.431px;">&lt;audit_bi_pro&gt; sale.sql</span><span class="t" style="left:443px;top:80.5px;font-size:12px;line-height:18px;color:#000;letter-spacing:0.423px;">&lt;audit_bi_pro&gt; return_change.sql</span><span class="t" style="left:687px;top:80.5px;font-size:12px;line-height:18px;color:#000;letter-spacing:0.440px;">*&lt;audit_bi_pro&gt; update_sbz_store.sql</span><span class="t" style="left:47.5px;top:668px;font-size:12px;line-height:18px;color:#000;letter-spacing:-0.004px;">统计 1</span><span class="t" style="left:30.5px;top:690px;font-size:12px;line-height:18px;color:#000;letter-spacing:0.746px;">Name</span><span class="t" style="left:275.5px;top:690px;font-size:12px;line-height:18px;color:#000;letter-spacing:0.338px;">Value</span><span class="t" style="left:30px;top:712.5px;font-size:12px;line-height:18px;color:#000;letter-spacing:0.607px;">Updated Rows</span><span class="t" style="left:275px;top:712.5px;font-size:12px;line-height:18px;color:#000;">1</span><span class="t" style="left:30px;top:733.5px;font-size:12px;line-height:18px;color:#000;letter-spacing:0.463px;">Query</span><span class="t" style="left:275px;top:733.5px;font-size:12px;line-height:18px;color:#000;letter-spacing:0.169px;">UPDATE custom_online_sale_return_local</span><span class="t" style="left:275px;top:754.5px;font-size:12px;line-height:18px;color:#000;letter-spacing:0.182px;">SET store_code = CASE</span><span class="t" style="left:291.5px;top:775.5px;font-size:12px;line-height:18px;color:#000;letter-spacing:0.293px;">WHEN store_code IN ('K1305', 'SF00287') THEN 'SF00287'</span><span class="t" style="left:291.5px;top:796.5px;font-size:12px;line-height:18px;color:#000;letter-spacing:0.293px;">WHEN store_code IN ('K1963', 'SF00283') THEN 'SF00283'</span><span class="t" style="left:786px;top:836px;font-size:12px;line-height:18px;color:#000;letter-spacing:-0.667px;">CST</span><span class="t" style="left:822px;top:836px;font-size:12px;line-height:18px;color:#000;letter-spacing:-0.344px;">zh</span><span class="t" style="left:849px;top:836px;font-size:12px;line-height:18px;color:#000;letter-spacing:-0.008px;">可写</span><span class="t" style="left:983px;top:836px;font-size:12px;line-height:18px;color:#000;letter-spacing:-0.004px;">智能插入</span><span class="t" style="left:1111px;top:836px;font-size:12px;line-height:18px;color:#000;letter-spacing:0.401px;">3 : 1 : 111</span><span class="t" style="left:1239px;top:836px;font-size:12px;line-height:18px;color:#000;letter-spacing:0.184px;">Sel: 0 | 0</span><span class="t" style="left:1443.5px;top:870.5px;font-size:12px;line-height:18px;color:#fff;letter-spacing:-0.339px;">ENG</span><span class="t" style="left:1496px;top:861.5px;font-size:12px;line-height:18px;color:#fff;letter-spacing:-0.006px;">14:54</span><span class="t" style="left:1477px;top:880.5px;font-size:12px;line-height:18px;color:#fff;letter-spacing:0.494px;">2025/10/21</span><span class="t" style="left:1570.5px;top:877.5px;font-size:13px;line-height:20px;color:#fff;font-weight:bold;">8</span>
<div class="wm" style="left:12px;top:130.5px;">audit审计01(Audit1)
audit-172.18.210.237</div><div class="wm" style="left:312px;top:130.5px;">audit审计01(Audit1)
audit-172.18.210.237</div><div class="wm" style="left:612px;top:130.5px;">audit审计01(Audit1)
audit-172.18.210.237</div><div class="wm" style="left:912px;top:130.5px;">audit审计01(Audit1)
audit-172.18.210.237</div><div class="wm" style="left:1212px;top:130.5px;">audit审计01(Audit1)
audit-172.18.210.237</div><div class="wm" style="left:1512px;top:130.5px;">audit审计01(Audit1)
audit-172.18.210.237</div><div class="wm" style="left:12px;top:430.5px;">audit审计01(Audit1)
audit-172.18.210.237</div><div class="wm" style="left:312px;top:430.5px;">audit审计01(Audit1)
audit-172.18.210.237</div><div class="wm" style="left:612px;top:430.5px;">audit审计01(Audit1)
audit-172.18.210.237</div><div class="wm" style="left:912px;top:430.5px;">audit审计01(Audit1)
audit-172.18.210.237</div><div class="wm" style="left:1212px;top:430.5px;">audit审计01(Audit1)
audit-172.18.210.237</div><div class="wm" style="left:1512px;top:430.5px;">audit审计01(Audit1)
audit-172.18.210.237</div><div class="wm" style="left:12px;top:730.5px;">audit审计01(Audit1)
audit-172.18.210.237</div><div class="wm" style="left:312px;top:730.5px;">audit审计01(Audit1)
audit-172.18.210.237</div><div class="wm" style="left:612px;top:730.5px;">audit审计01(Audit1)
audit-172.18.210.237</div><div class="wm" style="left:912px;top:730.5px;">audit审计01(Audit1)
audit-172.18.210.237</div><div class="wm" style="left:1212px;top:730.5px;">audit审计01(Audit1)
audit-172.18.210.237</div><div class="wm" style="left:1512px;top:730.5px;">audit审计01(Audit1)
audit-172.18.210.237</div>
</body></html>
